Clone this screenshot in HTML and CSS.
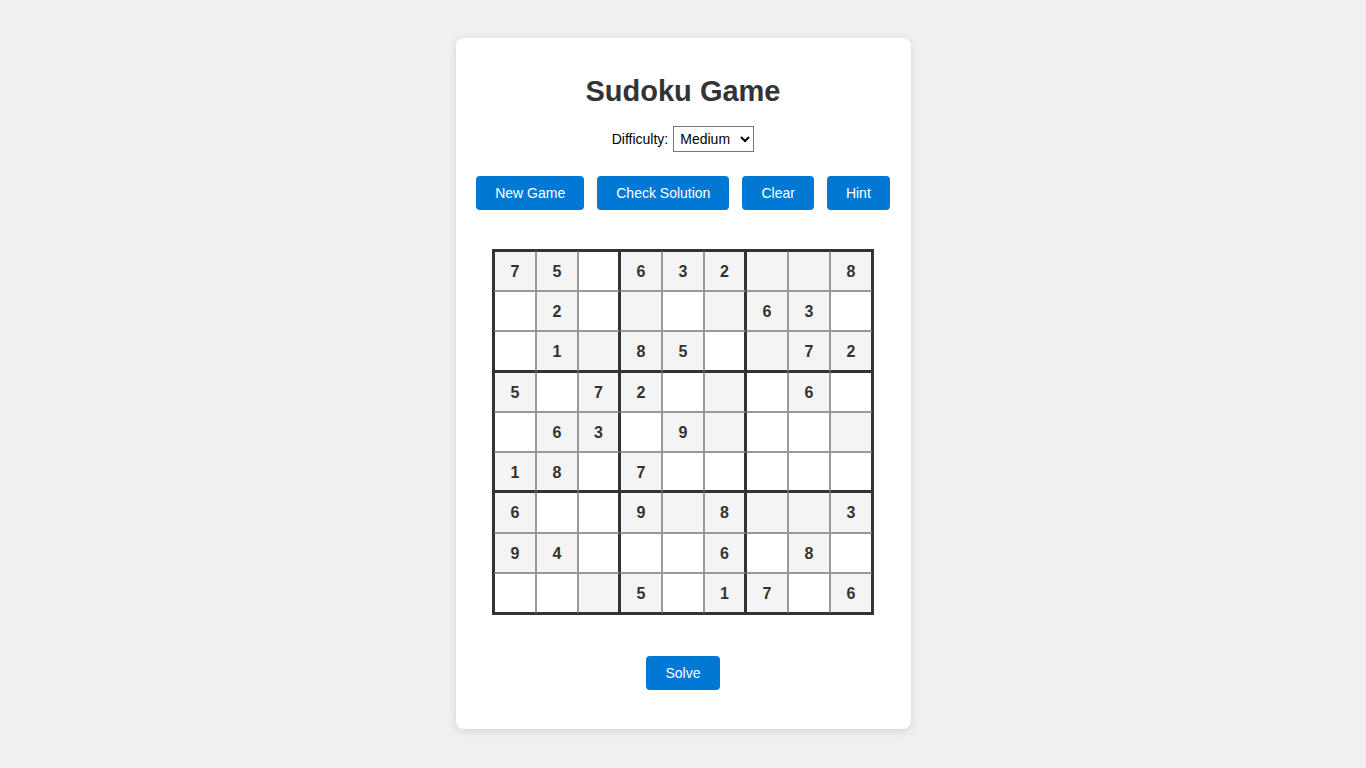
FILE: index.html
```html
<!DOCTYPE html>
<html lang="en">
<head>
<meta charset="utf-8">
<title>Sudoku Game</title>
<link rel="stylesheet" href="styles.css">
</head>
<body>
<div class="card">
  <h1 class="title">Sudoku Game</h1>
  <div class="difficulty">
    <label for="diff" class="diff-label">Difficulty:</label>
    <select id="diff" class="diff-select">
      <option>Easy</option>
      <option selected>Medium</option>
      <option>Hard</option>
    </select>
  </div>
  <div class="controls">
    <button class="btn">New Game</button>
    <button class="btn">Check Solution</button>
    <button class="btn">Clear</button>
    <button class="btn">Hint</button>
  </div>
  <div class="board">
    <div class="cell g">7</div><div class="cell g">5</div><div class="cell"></div><div class="cell g">6</div><div class="cell g">3</div><div class="cell g">2</div><div class="cell g"></div><div class="cell g"></div><div class="cell g">8</div>
    <div class="cell"></div><div class="cell g">2</div><div class="cell"></div><div class="cell g"></div><div class="cell"></div><div class="cell g"></div><div class="cell g">6</div><div class="cell g">3</div><div class="cell"></div>
    <div class="cell"></div><div class="cell g">1</div><div class="cell g"></div><div class="cell g">8</div><div class="cell g">5</div><div class="cell"></div><div class="cell g"></div><div class="cell g">7</div><div class="cell g">2</div>
    <div class="cell g">5</div><div class="cell"></div><div class="cell g">7</div><div class="cell g">2</div><div class="cell"></div><div class="cell g"></div><div class="cell"></div><div class="cell g">6</div><div class="cell"></div>
    <div class="cell"></div><div class="cell g">6</div><div class="cell g">3</div><div class="cell"></div><div class="cell g">9</div><div class="cell g"></div><div class="cell"></div><div class="cell"></div><div class="cell g"></div>
    <div class="cell g">1</div><div class="cell g">8</div><div class="cell"></div><div class="cell g">7</div><div class="cell"></div><div class="cell"></div><div class="cell"></div><div class="cell"></div><div class="cell"></div>
    <div class="cell g">6</div><div class="cell"></div><div class="cell"></div><div class="cell g">9</div><div class="cell g"></div><div class="cell g">8</div><div class="cell g"></div><div class="cell g"></div><div class="cell g">3</div>
    <div class="cell g">9</div><div class="cell g">4</div><div class="cell"></div><div class="cell"></div><div class="cell"></div><div class="cell g">6</div><div class="cell"></div><div class="cell g">8</div><div class="cell"></div>
    <div class="cell"></div><div class="cell"></div><div class="cell g"></div><div class="cell g">5</div><div class="cell"></div><div class="cell g">1</div><div class="cell g">7</div><div class="cell"></div><div class="cell g">6</div>
  </div>
  <div class="solve-row">
    <button class="btn">Solve</button>
  </div>
</div>
</body>
</html>
```

FILE: styles.css
```css
html, body {
  margin: 0;
  padding: 0;
}
body {
  background: #f0f0f0;
  font-family: "Liberation Sans", Arial, sans-serif;
  color: #333;
  padding-top: 38px;
  padding-bottom: 20px;
}
.card {
  width: 455px;
  box-sizing: border-box;
  margin: 0 auto;
  background: #fff;
  border-radius: 8px;
  box-shadow: 0 2px 8px rgba(0, 0, 0, 0.12);
  padding: 20px 20px 39px;
  display: flex;
  flex-direction: column;
  align-items: center;
}
.title {
  margin: 15px 0 0;
  font-size: 29px;
  line-height: 37px;
  font-weight: bold;
  color: #333;
}
.difficulty {
  margin-top: 16px;
  display: flex;
  align-items: center;
  gap: 5px;
  font-size: 14px;
  color: #000;
}
.diff-select {
  font-family: "Liberation Sans", Arial, sans-serif;
  font-size: 14px;
  height: 26px;
  width: 81px;
  padding: 0 2px;
  border: 1px solid #767676;
  border-radius: 0;
  background: #fff;
  color: #000;
}
.controls {
  margin-top: 24px;
  display: flex;
  gap: 13px;
}
.btn {
  font-family: "Liberation Sans", Arial, sans-serif;
  font-size: 14px;
  line-height: 16px;
  padding: 9px 19px;
  border: none;
  border-radius: 4px;
  background: #0078d4;
  color: #fff;
  cursor: pointer;
}
.board {
  margin-top: 39px;
  width: 382px;
  box-sizing: border-box;
  border: 2px solid #333;
  display: grid;
  grid-template-columns: repeat(9, 1fr);
  grid-auto-rows: 40.22px;
}
.cell {
  box-sizing: border-box;
  border: 1px solid #999;
  background: #fff;
  display: flex;
  align-items: center;
  justify-content: center;
  padding-top: 2px;
  font-size: 16px;
  font-weight: bold;
  color: #333;
}
.cell.g {
  background: #f4f4f4;
}
.cell:nth-child(9n+1) { border-left-color: #333; }
.cell:nth-child(9n) { border-right-color: #333; }
.cell:nth-child(9n+3),
.cell:nth-child(9n+6) { border-right: 2px solid #333; }
.cell:nth-child(9n+4),
.cell:nth-child(9n+7) { border-left-color: #333; }
.cell:nth-child(-n+9) { border-top-color: #333; }
.cell:nth-child(n+73) { border-bottom-color: #333; }
.cell:nth-child(n+19):nth-child(-n+27),
.cell:nth-child(n+46):nth-child(-n+54) { border-bottom: 2px solid #333; }
.cell:nth-child(n+28):nth-child(-n+36),
.cell:nth-child(n+55):nth-child(-n+63) { border-top-color: #333; }
.solve-row {
  margin-top: 41px;
  display: flex;
  justify-content: center;
}
```
